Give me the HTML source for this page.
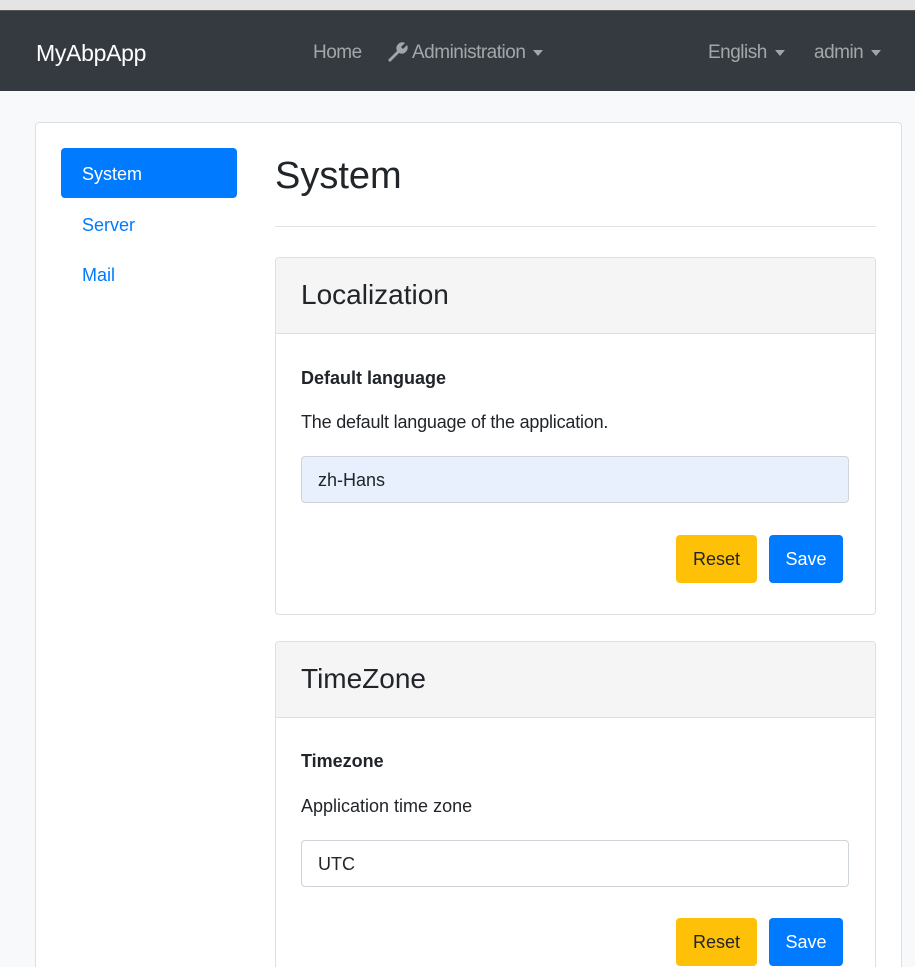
<!DOCTYPE html>
<html style="height:967px;overflow:hidden"><head><style>
*{box-sizing:border-box;margin:0;padding:0}
body{width:915px;height:967px;overflow:hidden;background:#f8f9fa;font-family:"Liberation Sans",sans-serif;color:#212529;position:relative}
.a{position:absolute}
.top{left:0;top:0;width:915px;height:10px;background:#e4e4e4}
.nav{left:0;top:10px;width:915px;height:81px;background:#343a40;border-top:1px solid #555}
.nl{color:rgba(255,255,255,.55);font-size:19px}
.car{display:inline-block;width:0;height:0;border-left:5px solid transparent;border-right:5px solid transparent;border-top:6px solid rgba(255,255,255,.55);vertical-align:middle;margin-left:8px}
.card{left:35px;top:122px;width:867px;height:860px;background:#fff;border:1px solid #dfdfdf;border-radius:4px}
.sc{left:275px;width:601px;border:1px solid #dfdfdf;border-radius:4px;background:#fff;overflow:hidden}
.sh{height:76px;background:#f5f5f5;border-bottom:1px solid #dfdfdf;font-size:28px;padding:21px 0 0 25px}
.inp{position:absolute;left:25px;width:548px;height:47px;border:1px solid #ced4da;border-radius:4px;font-size:18px;padding:13px 16px}
.btn{position:absolute;height:48px;border-radius:4px;font-size:18px;text-align:center;padding-top:14px}
</style></head><body>
<div class="a top"></div>
<div class="a nav">
<div class="a" style="left:36px;top:29px;color:#fff;font-size:23px;letter-spacing:-0.3px">MyAbpApp</div>
<div class="a nl" style="left:313px;top:31px;letter-spacing:-0.5px">Home</div>
<svg class="a" style="left:386px;top:30px" width="22" height="22" viewBox="0 0 22 22"><path d="M2 19 L11 10 A6 6 0 0 1 19 2 L15 6 L17 8 L21 4 A6 6 0 0 1 13 12 L4 21 Z" fill="rgba(255,255,255,.55)"/></svg>
<div class="a nl" style="left:412px;top:31px;letter-spacing:-0.5px">Administration<span class="car"></span></div>
<div class="a nl" style="left:708px;top:31px;letter-spacing:-0.5px">English<span class="car"></span></div>
<div class="a nl" style="left:814px;top:31px;letter-spacing:-0.5px">admin<span class="car"></span></div>
</div>
<div class="a card"></div>
<div class="a" style="left:61px;top:148px;width:176px;height:50px;background:#007bff;border-radius:4px;color:#fff;font-size:18px;padding:16px 0 0 21px">System</div>
<div class="a" style="left:82px;top:215px;color:#007bff;font-size:18px">Server</div>
<div class="a" style="left:82px;top:265px;color:#007bff;font-size:18px">Mail</div>
<div class="a" style="left:275px;top:155px;font-size:38px">System</div>
<div class="a" style="left:275px;top:226px;width:601px;height:1px;background:#e3e3e3"></div>
<div class="a sc" style="top:257px;height:358px">
<div class="sh">Localization</div>
<div class="a" style="left:25px;top:110px;font-size:18px;font-weight:bold">Default language</div>
<div class="a" style="left:25px;top:154px;font-size:18px;letter-spacing:-0.2px">The default language of the application.</div>
<div class="inp" style="top:198px;background:#e8f0fe">zh-Hans</div>
<div class="btn" style="left:400px;top:277px;width:81px;background:#ffc107">Reset</div>
<div class="btn" style="left:493px;top:277px;width:74px;background:#007bff;color:#fff">Save</div>
</div>
<div class="a sc" style="top:641px;height:360px">
<div class="sh">TimeZone</div>
<div class="a" style="left:25px;top:109px;font-size:18px;font-weight:bold">Timezone</div>
<div class="a" style="left:25px;top:154px;font-size:18px">Application time zone</div>
<div class="inp" style="top:198px;background:#fff">UTC</div>
<div class="btn" style="left:400px;top:276px;width:81px;background:#ffc107">Reset</div>
<div class="btn" style="left:493px;top:276px;width:74px;background:#007bff;color:#fff">Save</div>
</div>
</body></html>
